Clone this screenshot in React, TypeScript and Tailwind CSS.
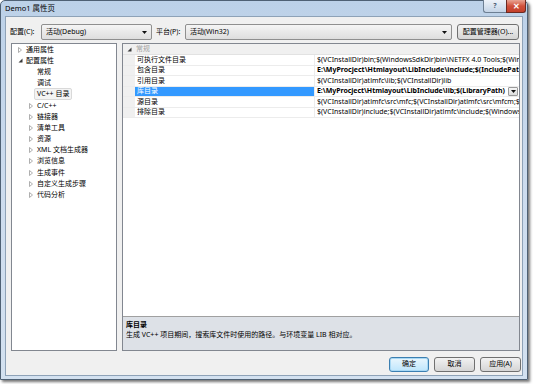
import React from "react";

const FONT = "font-['Noto_Sans','Noto_Sans_CJK_SC',sans-serif]";

type TreeItem = { label: string; level: 0 | 1; arrow?: "open" | "closed"; selected?: boolean };

const TREE: TreeItem[] = [
  { label: "通用属性", level: 0, arrow: "closed" },
  { label: "配置属性", level: 0, arrow: "open" },
  { label: "常规", level: 1 },
  { label: "调试", level: 1 },
  { label: "VC++ 目录", level: 1, selected: true },
  { label: "C/C++", level: 1, arrow: "closed" },
  { label: "链接器", level: 1, arrow: "closed" },
  { label: "清单工具", level: 1, arrow: "closed" },
  { label: "资源", level: 1, arrow: "closed" },
  { label: "XML 文档生成器", level: 1, arrow: "closed" },
  { label: "浏览信息", level: 1, arrow: "closed" },
  { label: "生成事件", level: 1, arrow: "closed" },
  { label: "自定义生成步骤", level: 1, arrow: "closed" },
  { label: "代码分析", level: 1, arrow: "closed" },
];

const PROPS = [
  { name: "可执行文件目录", value: "$(VCInstallDir)bin;$(WindowsSdkDir)bin\\NETFX 4.0 Tools;$(WindowsSdkDir)bin;$(VSInstallDir)" },
  { name: "包含目录", value: "E:\\MyProcject\\Htmlayout\\LibInclude\\include;$(IncludePath)", bold: true },
  { name: "引用目录", value: "$(VCInstallDir)atlmfc\\lib;$(VCInstallDir)lib" },
  { name: "库目录", value: "E:\\MyProcject\\Htmlayout\\LibInclude\\lib;$(LibraryPath)", bold: true, selected: true },
  { name: "源目录", value: "$(VCInstallDir)atlmfc\\src\\mfc;$(VCInstallDir)atlmfc\\src\\mfcm;$(VCInstallDir)" },
  { name: "排除目录", value: "$(VCInstallDir)include;$(VCInstallDir)atlmfc\\include;$(WindowsSdkDir)include" },
];

function DownTri() {
  return (
    <svg width="5" height="3" viewBox="0 0 5 3" className="shrink-0">
      <path d="M0 0h5L2.5 3z" fill="#111" />
    </svg>
  );
}

function TreeArrow({ kind }: { kind?: "open" | "closed" }) {
  if (kind === "closed")
    return (
      <svg width="4" height="6" viewBox="0 0 4 6">
        <path d="M0.5 0.5L3.5 3L0.5 5.5z" fill="none" stroke="#9a9a9a" strokeWidth="0.8" />
      </svg>
    );
  if (kind === "open")
    return (
      <svg width="5" height="5" viewBox="0 0 5 5">
        <path d="M4.5 0.5V4.5H0.5z" fill="#3b3b3b" />
      </svg>
    );
  return <span className="w-[4px]" />;
}

function Combo({ text, width }: { text: string; width: string }) {
  return (
    <div
      className={`${width} h-[16px] flex items-center justify-between rounded-[2px] border border-[#8f8f8f] bg-linear-to-b from-[#f5f5f5] to-[#dedede] pl-[4px] pr-[4px]`}
    >
      <span className="text-[7px] text-black">{text}</span>
      <DownTri />
    </div>
  );
}

function WinButton({ label, width, primary }: { label: string; width: string; primary?: boolean }) {
  return (
    <div
      className={`${width} h-[15px] flex items-center justify-center rounded-[3px] border text-[7px] text-black ${
        primary
          ? "border-[#3c7fb1] bg-linear-to-b from-[#eaf6fd] to-[#bee6fd] shadow-[inset_0_0_0_1px_#a8d8f4]"
          : "border-[#707070] bg-linear-to-b from-[#f2f2f2] to-[#d5d5d5]"
      }`}
    >
      {label}
    </div>
  );
}

export default function App() {
  return (
    <div className={`w-[534px] h-[384px] bg-white ${FONT}`}>
      <div className="w-[528px] h-[380px] flex flex-col rounded-t-[5px] border border-[#4f6174] bg-linear-to-b from-[#bcd1e8] via-[#cddcee] to-[#d3e1f0] px-[4px] pb-[3px] shadow-[2px_2px_3px_rgba(0,0,0,0.55)]">
        {/* Title bar */}
        <div className="h-[15px] flex items-start shrink-0">
          <span className="mt-[3px] text-[7.5px] leading-[9px] text-black">Demo1 属性页</span>
          <div className="ml-auto -mr-[3px] -mt-[1px] flex">
            <div className="w-[23px] h-[13px] flex items-center justify-center rounded-bl-[3px] border border-[#6d7f93] border-t-0 border-r-0 bg-linear-to-b from-[#eef3f9] to-[#c4d4e6] text-[7px] font-bold text-[#4a5d73]">
              ?
            </div>
            <div className="w-[20px] h-[13px] flex items-center justify-center rounded-br-[3px] border border-[#6b2a22] border-t-0 bg-linear-to-b from-[#e8a493] via-[#d0503b] to-[#c3402a] text-[8px] font-bold text-white">
              ✕
            </div>
          </div>
        </div>

        {/* Client area */}
        <div className="flex-1 flex flex-col border border-[#8ea2b7] bg-[#f0f0f0] pl-[4px] pr-[2px] pt-[7px]">
          {/* Configuration row */}
          <div className="h-[16px] flex items-center text-[7px] text-black">
            <span className="w-[31px]">配置(C):</span>
            <Combo text="活动(Debug)" width="w-[111px]" />
            <span className="ml-[4px] w-[29px]">平台(P):</span>
            <Combo text="活动(Win32)" width="w-[267px]" />
            <div className="ml-[5px] w-[62px] h-[16px] flex items-center justify-center rounded-[3px] border border-[#707070] bg-linear-to-b from-[#f2f2f2] to-[#d5d5d5] text-[7px]">
              配置管理器(O)...
            </div>
          </div>

          {/* Panels */}
          <div className="mt-[3px] h-[308px] flex gap-[5px] pl-[1px]">
            {/* Tree */}
            <div className="w-[106px] h-full border border-[#828790] bg-white">
              {TREE.map(item => (
                <div key={item.label} className="h-[11.2px] flex items-center">
                  <div className={`flex items-center ${item.level === 0 ? "pl-[6px]" : "pl-[17px]"}`}>
                    <div className="w-[7px] flex items-center">
                      <TreeArrow kind={item.arrow} />
                    </div>
                    <span
                      className={`text-[7px] leading-[10px] px-[1px] text-black ${
                        item.selected ? "rounded-[2px] border border-[#d9d9d9] bg-[#f4f4f4] -ml-[2px] px-[2px]" : ""
                      }`}
                    >
                      {item.label}
                    </span>
                  </div>
                </div>
              ))}
            </div>

            {/* Property grid */}
            <div className="w-[398px] h-full flex flex-col border border-[#828790] bg-white">
              <div className="flex-1">
                <div className="h-[11px] flex items-center bg-[#f0f0f0] border-b border-[#e2e2e2]">
                  <div className="w-[12px] flex justify-center">
                    <TreeArrow kind="open" />
                  </div>
                  <span className="pl-[1px] text-[7px] text-[#a3a3a3]">常规</span>
                </div>
                {PROPS.map(p => (
                  <div key={p.name} className="h-[10.5px] flex border-b border-[#ececec]">
                    <div className="w-[12px] bg-[#f0f0f0]" />
                    <div
                      className={`w-[179px] flex items-center pl-[2px] text-[7px] whitespace-nowrap overflow-hidden ${
                        p.selected ? "bg-[#3399ff] text-white" : "text-black"
                      }`}
                    >
                      {p.name}
                    </div>
                    <div className="flex-1 min-w-0 flex items-center border-l border-[#ececec] pl-[2px]">
                      <span
                        className={`flex-1 min-w-0 overflow-hidden whitespace-nowrap text-[7px] text-black ${
                          p.bold ? "font-bold" : ""
                        } ${p.selected ? "tracking-[-0.05px]" : ""}`}
                      >
                        {p.value}
                      </span>
                      {p.selected && (
                        <div className="ml-[1px] mr-[1px] w-[10px] h-[9px] shrink-0 flex items-center justify-center rounded-[1px] border border-[#9a9a9a] bg-linear-to-b from-[#f6f6f6] to-[#dcdcdc]">
                          <DownTri />
                        </div>
                      )}
                    </div>
                  </div>
                ))}
              </div>
              {/* Description */}
              <div className="h-[34px] border-t border-[#a0a0a0] bg-[#dde1e7] px-[3px] pt-[3px] text-[7px] leading-[10px] text-black">
                <div className="font-bold">库目录</div>
                <div>生成 VC++ 项目期间，搜索库文件时使用的路径。与环境变量 LIB 相对应。</div>
              </div>
            </div>
          </div>

          {/* Buttons */}
          <div className="mt-[6px] flex justify-end gap-[5px] -mr-[1px]">
            <WinButton label="确定" width="w-[40px]" primary />
            <WinButton label="取消" width="w-[41px]" />
            <WinButton label="应用(A)" width="w-[41px]" />
          </div>
        </div>
      </div>
    </div>
  );
}
